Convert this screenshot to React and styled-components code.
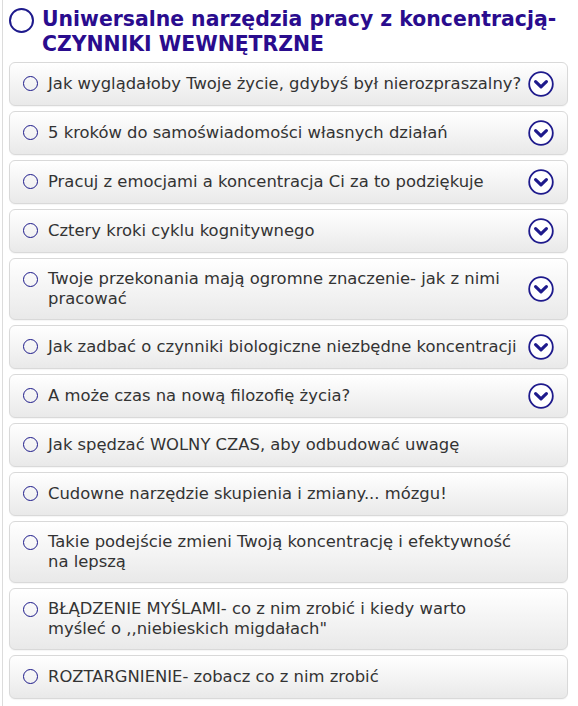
import React from 'react';
import styled, { createGlobalStyle } from 'styled-components';

const GlobalStyle = createGlobalStyle`
  html, body {
    margin: 0;
    padding: 0;
    background: #ffffff;
  }
  body {
    font-family: 'DejaVu Sans', Verdana, sans-serif;
  }
`;

const Page = styled.div`
  margin-left: 2px;
  border-left: 1px solid #dcdcdc;
  padding: 8px 10px 6px 6px;
  min-height: 706px;
  box-sizing: border-box;
`;

const Header = styled.div`
  display: flex;
  align-items: flex-start;
  gap: 8px;
  margin-bottom: 5px;
`;

const HeaderRing = styled.span`
  flex: 0 0 auto;
  width: 21px;
  height: 21px;
  margin-top: 0;
  border: 2px solid #1e1a8c;
  border-radius: 50%;
`;

const Title = styled.h1`
  margin: 0;
  margin-top: -1px;
  font-size: 20.4px;
  line-height: 25px;
  font-weight: bold;
  color: #2a0c8e;
`;

const List = styled.div`
  display: flex;
  flex-direction: column;
  gap: 5px;
`;

const Card = styled.div`
  display: flex;
  align-items: center;
  gap: 4px;
  padding: 8px 13px 8px 13px;
  border: 1px solid #d9d9d9;
  border-radius: 6px;
  background: linear-gradient(to bottom, #ffffff 0%, #f4f4f4 50%, #e9e9e9 100%);
  box-shadow: 0 1px 1px rgba(0, 0, 0, 0.04);
`;

const Bullet = styled.span`
  flex: 0 0 auto;
  align-self: flex-start;
  box-sizing: border-box;
  width: 15px;
  height: 15px;
  margin-top: 5px;
  margin-right: 6px;
  border: 1.7px solid #1d1a8a;
  border-radius: 50%;
`;

const Label = styled.span`
  flex: 1 1 auto;
  padding: 2px 0;
  font-size: 16.4px;
  line-height: 20px;
  color: #333333;
`;

const Toggle = styled.span`
  flex: 0 0 26px;
  width: 26px;
  height: 26px;
  display: flex;
  align-items: center;
  justify-content: center;
  visibility: ${(p) => (p.$hidden ? 'hidden' : 'visible')};
`;

const Chevron = () => (
  <svg width="26" height="26" viewBox="0 0 26 26">
    <circle cx="13" cy="13" r="11.8" fill="#ffffff" stroke="#1e1a8c" strokeWidth="1.8" />
    <path d="M7.6 10.6 L13 15.8 L18.4 10.6" fill="none" stroke="#1e1a8c" strokeWidth="3.2" strokeLinecap="round" strokeLinejoin="round" />
  </svg>
);

const items = [
  { text: 'Jak wyglądałoby Twoje życie, gdybyś był nierozpraszalny?', more: true },
  { text: '5 kroków do samoświadomości własnych działań', more: true },
  { text: 'Pracuj z emocjami a koncentracja Ci za to podziękuje', more: true },
  { text: 'Cztery kroki cyklu kognitywnego', more: true },
  { text: 'Twoje przekonania mają ogromne znaczenie- jak z nimi pracować', more: true },
  { text: 'Jak zadbać o czynniki biologiczne niezbędne koncentracji', more: true },
  { text: 'A może czas na nową filozofię życia?', more: true },
  { text: 'Jak spędzać WOLNY CZAS, aby odbudować uwagę', more: false },
  { text: 'Cudowne narzędzie skupienia i zmiany... mózgu!', more: false },
  { text: 'Takie podejście zmieni Twoją koncentrację i efektywność na lepszą', more: false },
  { text: 'BŁĄDZENIE MYŚLAMI- co z nim zrobić i kiedy warto myśleć o ,,niebieskich migdałach"', more: false },
  { text: 'ROZTARGNIENIE- zobacz co z nim zrobić', more: false },
];

const App = () => {
  return (
    <>
      <GlobalStyle />
      <Page>
        <Header>
          <HeaderRing />
          <Title>
            Uniwersalne narzędzia pracy z koncentracją-
            <br />
            CZYNNIKI WEWNĘTRZNE
          </Title>
        </Header>
        <List>
          {items.map((item) => (
            <Card key={item.text}>
              <Bullet />
              <Label>{item.text}</Label>
              <Toggle $hidden={!item.more}>
                <Chevron />
              </Toggle>
            </Card>
          ))}
        </List>
      </Page>
    </>
  );
};

export default App;
